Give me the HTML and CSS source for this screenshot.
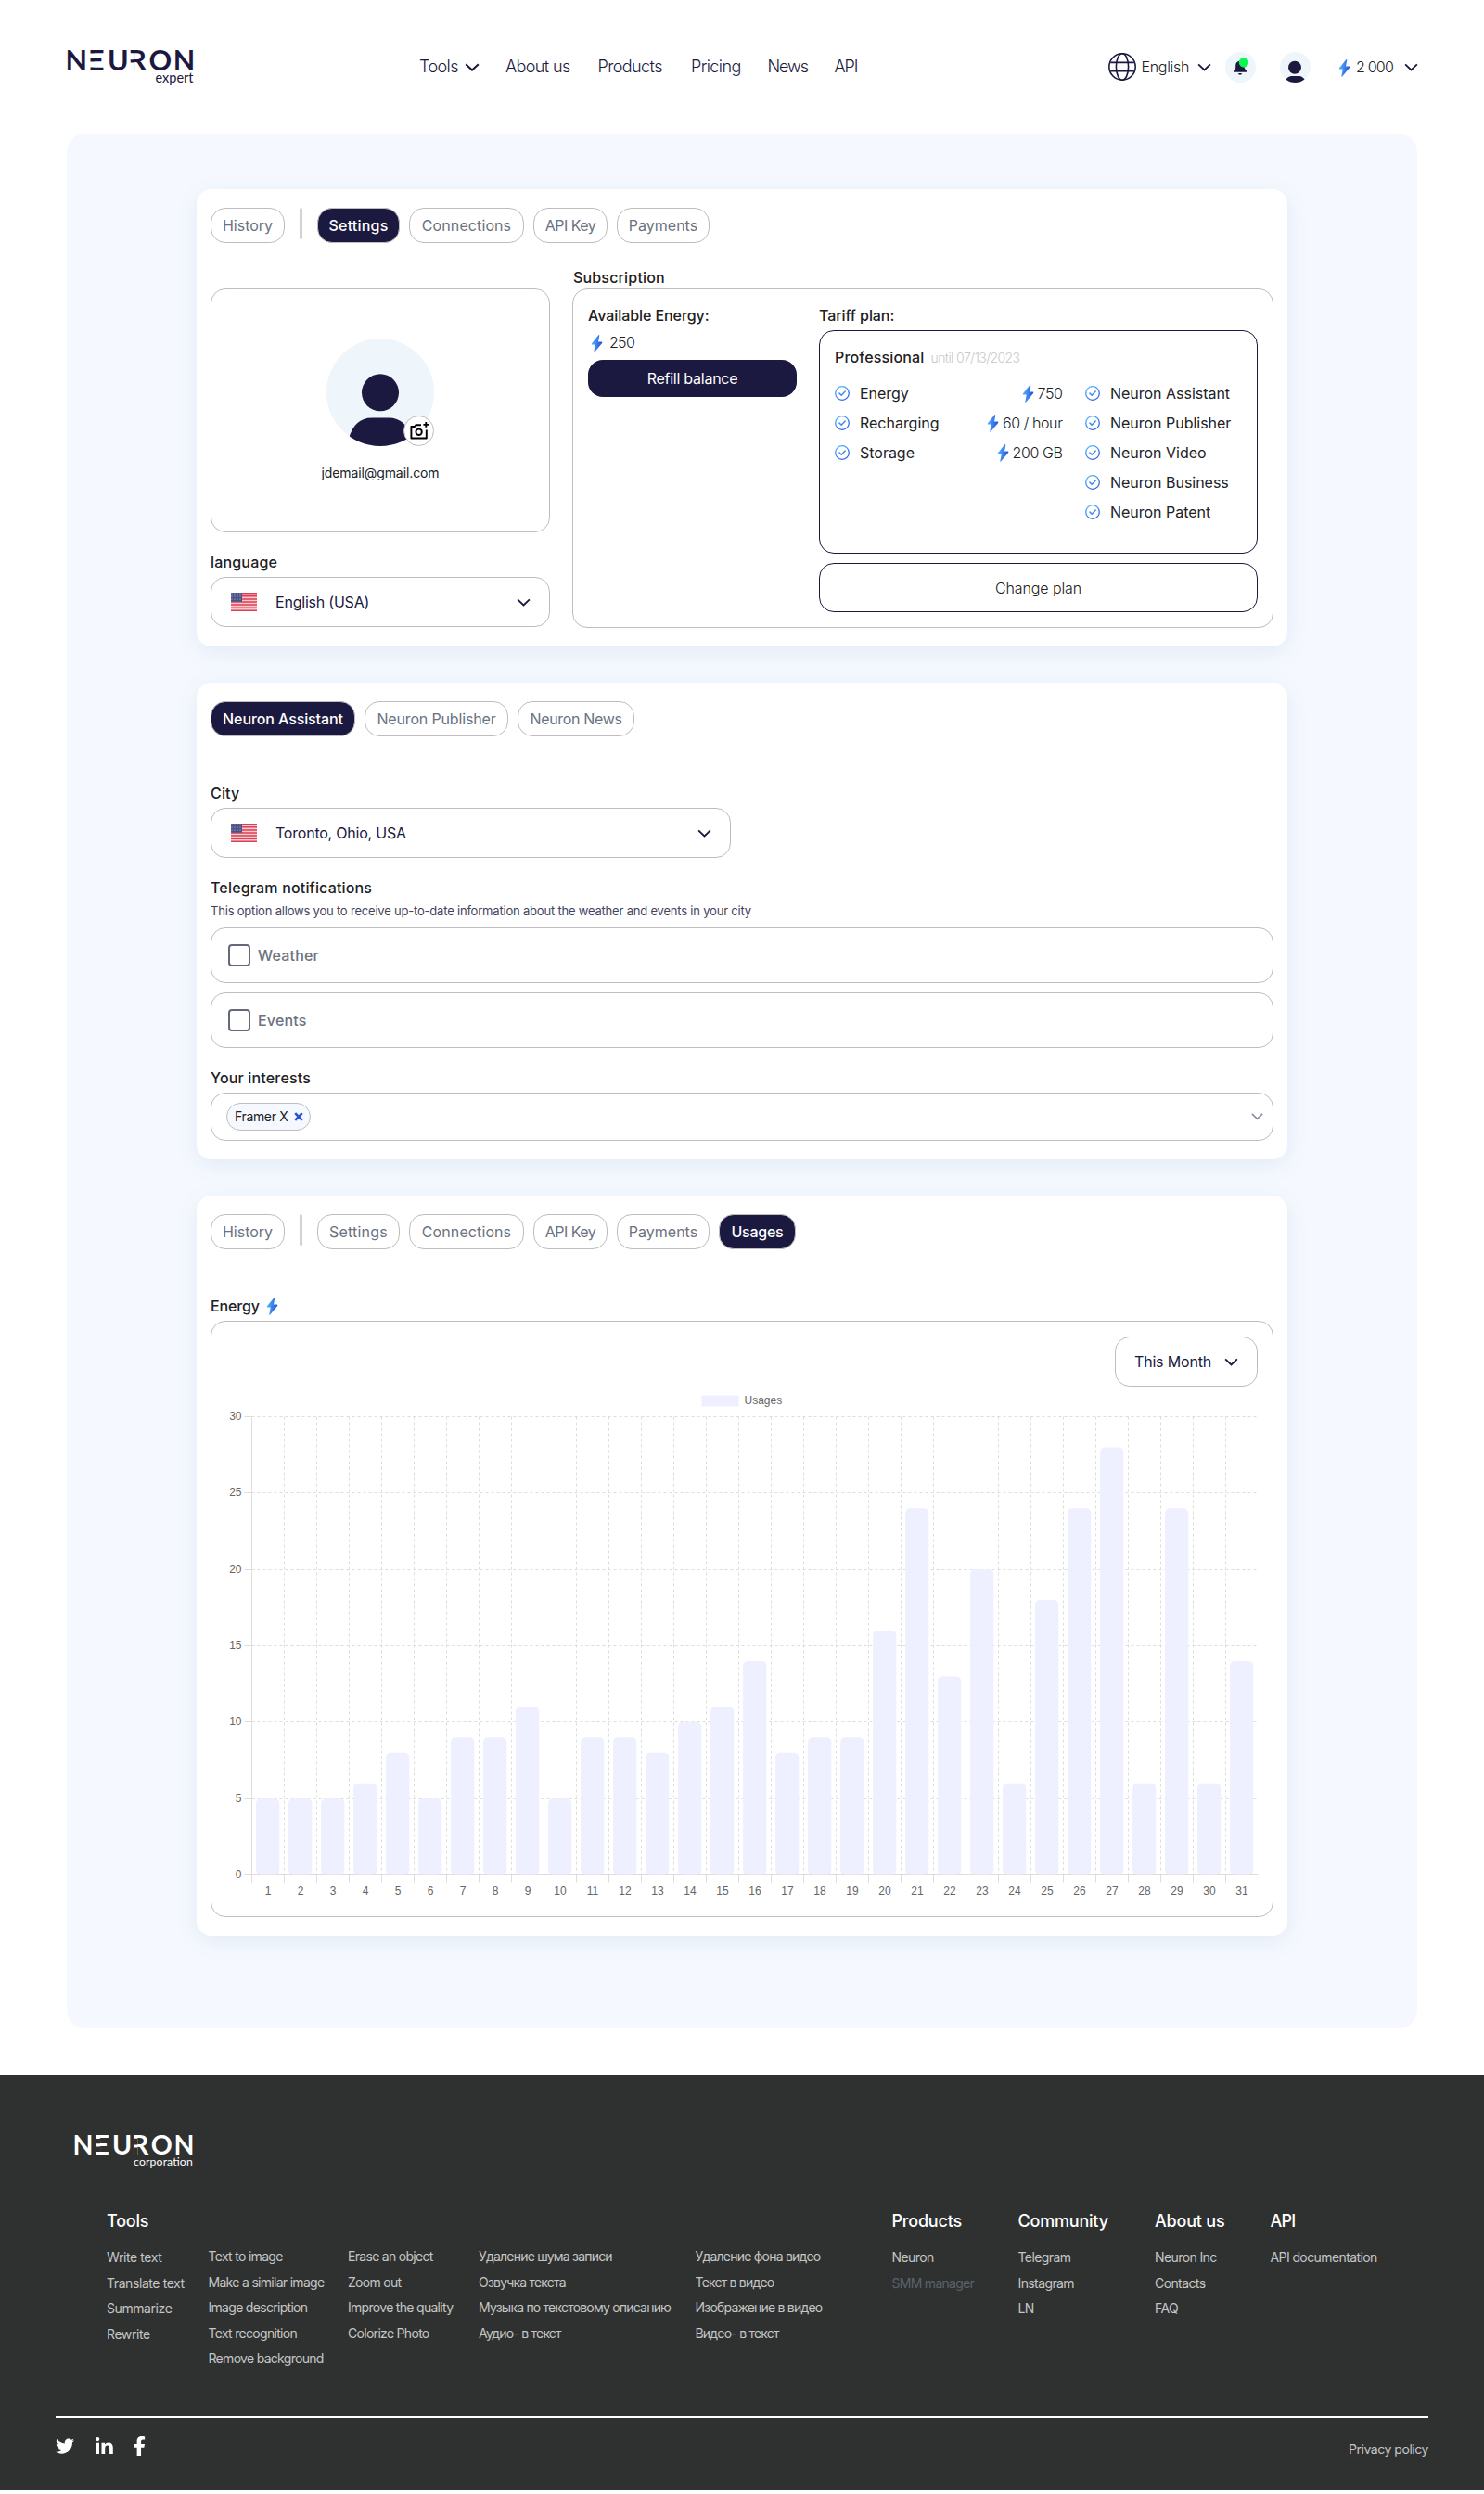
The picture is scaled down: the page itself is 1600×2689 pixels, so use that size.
FILE: index.html
```html
<!DOCTYPE html>
<html lang="en">
<head>
<meta charset="utf-8">
<title>Neuron Expert – Settings</title>
<link rel="stylesheet" href="styles.css">
</head>
<body>
<svg class="sprite" width="0" height="0" aria-hidden="true">
  <defs>
    <linearGradient id="bolt-fill" x1="0" y1="0.4" x2="1" y2="0.6">
      <stop offset="0" stop-color="#56b8f8"/>
      <stop offset="0.5" stop-color="#3b82f0"/>
      <stop offset="1" stop-color="#2349d8"/>
    </linearGradient>
    <linearGradient id="check-stroke" x1="0" y1="0" x2="0.6" y2="1">
      <stop offset="0" stop-color="#5cc0f8"/>
      <stop offset="1" stop-color="#2f62e6"/>
    </linearGradient>
    <clipPath id="avatar-clip"><circle cx="58" cy="58" r="58"/></clipPath>
    <pattern id="stars" width="3" height="3" patternUnits="userSpaceOnUse">
      <rect width="3" height="3" fill="#4b5087"/>
      <circle cx="1" cy="1" r=".55" fill="#d5d7ea"/>
    </pattern>
    <symbol id="bolt" viewBox="0 0 13 19">
      <path d="M8.3.2 1 9.2Q.2 10.4 1.5 10.5L4.7 10.6 3.3 18.2Q3.4 19.2 4.2 18.5L11.9 9.2Q12.9 7.8 11.5 7.6L8 7.4 9.3.8Q9.2-.4 8.3.2Z" fill="url(#bolt-fill)"/>
    </symbol>
    <symbol id="chevron" viewBox="0 0 16 9">
      <path d="M1.2 1.2 8 7.6 14.8 1.2" fill="none" stroke="#1b193f" stroke-width="2"/>
    </symbol>
    <symbol id="check" viewBox="0 0 16 16">
      <circle cx="8" cy="8" r="7.3" fill="none" stroke="url(#check-stroke)" stroke-width="1.3"/>
      <path d="M5 8.1 7.2 10.3 11.2 6" fill="none" stroke="#3f8cf0" stroke-width="1.5" stroke-linecap="round" stroke-linejoin="round"/>
    </symbol>
    <symbol id="flag" viewBox="0 0 28 20">
      <rect width="28" height="20" rx="1" fill="#fbc9cd"/>
      <path d="M0 .75H28M0 3.85H28M0 6.95H28M0 10.05H28M0 13.1H28M0 16.2H28M0 19.25H28" stroke="#d94256" stroke-width="1.5"/>
      <rect width="12" height="10" fill="url(#stars)"/>
    </symbol>
  </defs>
</svg>

<header class="header">
  <svg class="logo" width="140" height="44" viewBox="0 0 140 44" role="img" aria-label="Neuron expert">
    <text class="logo-name" y="26" x="-1.5 22.9 43.9 66.3 88.5 114.8">NEURON</text>
    <path class="logo-cut" d="M24.5 7.4H30V13.1H24.5ZM24.5 16.6H30V22.4H24.5ZM67.5 7.3H73V14.3H67.5ZM67.5 17.6H73V27H67.5Z"/>
    <text class="logo-sub" x="136.5" y="39" text-anchor="end" textLength="41">expert</text>
  </svg>
  <nav class="nav">
    <a class="nav-drop">Tools <svg width="16" height="9"><use href="#chevron"/></svg></a>
    <a>About us</a>
    <a>Products</a>
    <a>Pricing</a>
    <a class="tight">News</a>
    <a class="tight">API</a>
  </nav>
  <div class="actions">
    <svg width="30" height="30" viewBox="0 0 30 30" fill="none" stroke="#1b193f" stroke-width="1.6">
      <circle cx="15" cy="15" r="14.2"/><ellipse cx="15" cy="15" rx="6.6" ry="14.2"/><path d="M2.2 10.4H27.8M2.2 19.6H27.8"/>
    </svg>
    <span>English</span>
    <svg width="15" height="9"><use href="#chevron"/></svg>
    <svg width="33" height="33" viewBox="0 0 33 33">
      <circle cx="16.5" cy="16.5" r="16.5" fill="#eef5fb"/>
      <path d="M16 9.4A5 5 0 0 0 11.2 14.4V17.6L9 20.4V21.8H23V20.4L20.8 17.6V14.4A5 5 0 0 0 16 9.4ZM14 23H18A2 1.8 0 0 1 14 23Z" fill="#1b193f"/>
      <circle cx="20" cy="11.2" r="5.2" fill="#08fa51"/>
    </svg>
    <svg width="33" height="33" viewBox="0 0 33 33">
      <circle cx="16.5" cy="16.5" r="16.5" fill="#eef5fb"/>
      <circle cx="16" cy="16.7" r="7" fill="#1b193f"/>
      <path d="M6.3 29.5Q9 26 12 26H21Q24 26 26.500 29.500 22 33 16.500 33 10.500 33 6.300 29.500Z" fill="#1b193f"/>
    </svg>
    <svg class="header-bolt" width="13" height="19"><use href="#bolt"/></svg>
    <span class="balance">2 000</span>
    <svg width="15" height="9"><use href="#chevron"/></svg>
  </div>
</header>

<main class="panel">
  <section class="card">
    <div class="tabs">
      <a class="tab w-history">History</a><i class="divider"></i>
      <a class="tab w-settings active">Settings</a>
      <a class="tab w-connections">Connections</a>
      <a class="tab w-api">API Key</a>
      <a class="tab w-payments">Payments</a>
    </div>
    <div class="profile-grid">
      <div class="profile-side">
        <div class="box profile">
          <div class="avatar">
            <svg width="116" height="116" viewBox="0 0 116 116">
              <g clip-path="url(#avatar-clip)">
                <rect width="116" height="116" fill="#eef5fb"/>
                <circle cx="58" cy="58.3" r="20" fill="#1b193f"/>
                <path d="M24 108Q30 85.500 49 85.500H67Q86 85.500 92 108L92 116H24Z" fill="#1b193f"/>
              </g>
            </svg>
            <span class="camera">
              <svg width="21" height="19" viewBox="0 0 21 19" fill="none" stroke="#000" stroke-width="1.9" stroke-linejoin="round">
                <path d="M12 3.200H6.500L5 5H1.400V17.500H17.800V8.500"/><circle cx="9.600" cy="10.800" r="3.200"/><path d="M17.300 0V5.800M14.400 2.900H20.200"/>
              </svg>
            </span>
          </div>
          <p class="email">jdemail@gmail.com</p>
        </div>
        <h3 class="label side-label">language</h3>
        <div class="box select">
          <svg width="28" height="20"><use href="#flag"/></svg>
          <span class="select-text">English (USA)</span>
          <svg width="15" height="9"><use href="#chevron"/></svg>
        </div>
      </div>
      <div class="subscription">
        <h3 class="label sub-label">Subscription</h3>
        <div class="box sub-box">
          <div class="energy-col">
            <h3 class="label snug">Available Energy:</h3>
            <div class="energy-row"><svg width="13" height="19"><use href="#bolt"/></svg><span>250</span></div>
            <button class="btn-dark">Refill balance</button>
          </div>
          <div class="tariff-col">
            <h3 class="label snug tariff-label">Tariff plan:</h3>
            <div class="plan">
              <div class="plan-head"><h3 class="label">Professional</h3><span class="until">until 07/13/2023</span></div>
              <div class="plan-lists">
                <ul class="limits">
                  <li><svg width="16" height="16"><use href="#check"/></svg><span>Energy</span><b><svg width="13" height="19"><use href="#bolt"/></svg>750</b></li>
                  <li><svg width="16" height="16"><use href="#check"/></svg><span>Recharging</span><b><svg width="13" height="19"><use href="#bolt"/></svg>60 / hour</b></li>
                  <li><svg width="16" height="16"><use href="#check"/></svg><span>Storage</span><b><svg width="13" height="19"><use href="#bolt"/></svg>200 GB</b></li>
                </ul>
                <ul>
                  <li><svg width="16" height="16"><use href="#check"/></svg><span>Neuron Assistant</span></li>
                  <li><svg width="16" height="16"><use href="#check"/></svg><span>Neuron Publisher</span></li>
                  <li><svg width="16" height="16"><use href="#check"/></svg><span>Neuron Video</span></li>
                  <li><svg width="16" height="16"><use href="#check"/></svg><span>Neuron Business</span></li>
                  <li><svg width="16" height="16"><use href="#check"/></svg><span>Neuron Patent</span></li>
                </ul>
              </div>
            </div>
            <button class="btn-outline">Change plan</button>
          </div>
        </div>
      </div>
    </div>
  </section>

  <section class="card">
    <div class="tabs">
      <a class="tab w-assistant active">Neuron Assistant</a>
      <a class="tab w-publisher">Neuron Publisher</a>
      <a class="tab w-news">Neuron News</a>
    </div>
    <h3 class="label first-label">City</h3>
    <div class="box select city">
      <svg width="28" height="20"><use href="#flag"/></svg>
      <span class="select-text">Toronto, Ohio, USA</span>
      <svg width="15" height="9"><use href="#chevron"/></svg>
    </div>
    <h3 class="label next-label">Telegram notifications</h3>
    <p class="hint">This option allows you to receive up-to-date information about the weather and events in your city</p>
    <div class="box option"><i class="checkbox"></i>Weather</div>
    <div class="box option"><i class="checkbox"></i>Events</div>
    <h3 class="label next-label">Your interests</h3>
    <div class="box interests">
      <span class="chip">Framer X
        <svg width="10" height="10" viewBox="0 0 10 10" stroke="#2a52d6" stroke-width="2.6"><path d="M1.2 1.2 8.8 8.8M8.8 1.2 1.2 8.8"/></svg>
      </span>
      <svg width="13" height="8" viewBox="0 0 13 8" fill="none" stroke="#8d909c" stroke-width="1.5"><path d="M.8.9 6.5 6.4 12.2.9"/></svg>
    </div>
  </section>

  <section class="card">
    <div class="tabs">
      <a class="tab w-history">History</a><i class="divider"></i>
      <a class="tab w-settings">Settings</a>
      <a class="tab w-connections">Connections</a>
      <a class="tab w-api">API Key</a>
      <a class="tab w-payments">Payments</a>
      <a class="tab w-usages active">Usages</a>
    </div>
    <h3 class="label usage-label">Energy <svg width="13" height="19"><use href="#bolt"/></svg></h3>
    <div class="box usage">
      <div class="box period">This Month <svg width="15" height="9"><use href="#chevron"/></svg></div>
      <svg id="usage-chart" class="chart" width="1114" height="555" viewBox="0 0 1114 555"></svg>
    </div>
  </section>
</main>

<footer class="footer">
  <svg class="logo-footer" width="131" height="40" viewBox="0 0 140 42.7" role="img" aria-label="Neuron corporation">
    <text class="logo-name" y="26" x="-1.5 22.9 43.9 66.3 88.5 114.8">NEURON</text>
    <path class="logo-cut" d="M24.500 7.400H30V13.100H24.500ZM24.500 16.600H30V22.400H24.500ZM67.500 7.300H73V14.300H67.500ZM67.500 17.600H73V27H67.500Z"/>
    <text class="logo-sub small" x="136.5" y="38.5" text-anchor="end" textLength="68">corporation</text>
  </svg>
  <div class="links">
    <div class="wide"><h4>Tools</h4><a>Write text</a><a>Translate text</a><a>Summarize</a><a>Rewrite</a></div>
    <div class="no-head"><a>Text to image</a><a>Make a similar image</a><a>Image description</a><a>Text recognition</a><a>Remove background</a></div>
    <div class="no-head"><a>Erase an object</a><a>Zoom out</a><a>Improve the quality</a><a>Colorize Photo</a></div>
    <div class="no-head" lang="ru"><a>Удаление шума записи</a><a>Озвучка текста</a><a>Музыка по текстовому описанию</a><a>Аудио- в текст</a></div>
    <div class="no-head" lang="ru"><a>Удаление фона видео</a><a>Текст в видео</a><a>Изображение в видео</a><a>Видео- в текст</a></div>
    <div><h4>Products</h4><a>Neuron</a><a class="muted">SMM manager</a></div>
    <div><h4>Community</h4><a>Telegram</a><a>Instagram</a><a>LN</a></div>
    <div><h4>About us</h4><a>Neuron Inc</a><a>Contacts</a><a>FAQ</a></div>
    <div><h4 class="api">API</h4><a>API documentation</a></div>
  </div>
  <div class="bottom">
    <div class="social">
      <svg width="20" height="17" viewBox="0 0 512 416" fill="#fff"><path d="M459.4 103.7c.3 4.5.3 9.1.3 13.6C459.7 256 354.1 416 161.1 416 101.700 416 46.500 398.800 0 368.900c8.400 1 16.600 1.300 25.300 1.300 49.100 0 94.200-16.600 130.300-44.800-46.100-1-84.800-31.200-98.100-72.800 6.500 1 13 1.600 19.800 1.600 9.400 0 18.800-1.300 27.600-3.600C56.800 240.800 20.800 198.500 20.800 147.200v-1.300c14 7.800 30.200 12.700 47.400 13.300C39.900 140.400 21.400 108.200 21.400 71.800c0-19.500 5.200-37.400 14.300-53C87.400 82.500 165 124.100 252.100 128.700c-1.600-7.800-2.600-15.900-2.600-24C249.500 46.800 296.300 0 354.400 0c30.200 0 57.500 12.700 76.700 33.100 23.700-4.500 46.500-13.300 66.600-25.300-7.800 24.400-24.400 44.800-46.100 57.800 21.100-2.300 41.600-8.100 60.400-16.200-14.300 20.800-32.200 39.300-52.600 54.300z"/></svg>
      <svg class="linkedin" width="19" height="18" viewBox="0 0 19 18" fill="#fff"><circle cx="2.2" cy="2.1" r="2.1"/><path d="M.4 5.700H4V18H.4ZM6.500 5.700H10V7.400Q11.200 5.400 13.800 5.400 18.800 5.400 18.800 11V18H15.100V11.900Q15.100 8.500 12.800 8.500 10.200 8.500 10.200 11.900V18H6.500Z"/></svg>
      <svg class="facebook" width="12" height="21" viewBox="22 0 272 512" preserveAspectRatio="none" fill="#fff"><path d="M279.140 288l14.220-92.660h-88.910v-60.130c0-25.350 12.420-50.060 52.240-50.060h40.420V6.260S260.430 0 225.360 0c-73.220 0-121.080 44.380-121.080 124.720v70.620H22.890V288h81.390v224h100.170V288z"/></svg>
    </div>
    <a>Privacy policy</a>
  </div>
</footer>
<script src="chart.js"></script>
</body>
</html>
```
FILE: styles.css
```css
* { box-sizing: border-box; margin: 0; padding: 0; }

body {
  font-family: Inter, "Noto Sans", sans-serif;
  font-size: 16px;
  line-height: 24px;
  color: #202124;
  background: #fff;
}

svg { display: block; flex: none; overflow: visible; }
.sprite { position: absolute; }
ul { list-style: none; }
button { font: inherit; background: none; }

/* Header */
.header { display: flex; align-items: center; height: 144px; padding: 0 71px 0 72px; }
.logo { margin-bottom: 1px; color: #1b193f; --cut: #fff; }
.logo-footer { color: #fff; --cut: #2f3130; }
.logo-name { font: 700 30.5px Lato, sans-serif; fill: currentColor; }
.logo-sub { font: 400 14.5px Lato, sans-serif; fill: currentColor; }
.logo-sub.small { font-size: 13px; }
.logo-cut { fill: var(--cut); }

.nav {
  display: grid;
  grid-template-columns: 93px 99.5px 100.5px 82.5px 72px auto;
  align-items: center;
  margin-left: 240px;
  font-size: 18px;
  font-weight: 300;
  letter-spacing: -.6px;
  color: #1b193f;
}
.nav-drop { display: flex; align-items: center; gap: 7px; }
.nav .tight { letter-spacing: -1.1px; }

.actions {
  display: grid;
  grid-template-columns: 36px 60px 30px 59px 63px 19.5px 52px 15px;
  align-items: center;
  margin-left: auto;
  font-weight: 300;
  letter-spacing: -.3px;
}
.balance { letter-spacing: -.8px; }
.header-bolt { margin-top: 3px; }

/* Cards */
.panel {
  display: flex;
  flex-direction: column;
  gap: 39px;
  margin: 0 72px;
  padding: 60px 140px 100px;
  border-radius: 20px;
  background: #f5f9ff;
}
.card {
  padding: 20px 15px;
  border-radius: 16px;
  background: #fff;
  box-shadow: 0 6px 26px rgba(0, 60, 110, .08);
}
.box { border: 1px solid #bdbdbd; border-radius: 16px; }

.tabs { display: flex; gap: 10px; }
.tab {
  display: flex;
  align-items: center;
  justify-content: center;
  height: 38px;
  border: 1px solid #bdbdbd;
  border-radius: 16px;
  color: #6b7280;
}
.tab.active { background: #1b193f; color: #fff; font-weight: 500; }
.divider { width: 3px; height: 34px; margin: 0 6px; border-radius: 2px; background: #d2d2d4; }
.w-history { width: 80px; }
.w-settings { width: 89px; letter-spacing: .2px; }
.w-connections { width: 124px; letter-spacing: .1px; }
.w-api { width: 80px; letter-spacing: -.55px; }
.w-payments { width: 100px; }
.w-usages { width: 83px; letter-spacing: -.25px; }
.w-assistant { width: 156px; letter-spacing: -.1px; }
.w-publisher { width: 155px; letter-spacing: -.16px; }
.w-news { width: 126px; letter-spacing: -.34px; }

.label { font-size: 16px; font-weight: 500; letter-spacing: .17px; }
.label.snug { letter-spacing: -.07px; }

/* Profile and subscription */
.profile-grid { display: grid; grid-template-columns: 366px 756px; gap: 24px; }
.profile-side { padding-top: 49px; }
.profile { display: flex; flex-direction: column; align-items: center; height: 263px; padding-top: 53px; }
.avatar { position: relative; }
.camera {
  position: absolute;
  right: 0;
  bottom: 0;
  display: flex;
  align-items: center;
  justify-content: center;
  width: 33px;
  height: 33px;
  padding-left: 1px;
  border: 1px solid #bdbdbd;
  border-radius: 50%;
  background: #fff;
}
.email { margin-top: 17px; font-size: 14px; letter-spacing: -.1px; }
.side-label { margin: 20px 0 4px; }
.select { display: flex; align-items: center; height: 54px; padding: 0 20px 0 21px; color: #1b193f; }
.select-text { flex: 1; margin-left: 20px; letter-spacing: -.22px; }

.sub-label { margin: 25px 0 0 1px; }
.sub-box { display: flex; gap: 24px; height: 366px; padding: 16px; }
.energy-col { width: 225px; }
.energy-row {
  display: flex;
  align-items: center;
  gap: 7px;
  height: 33px;
  margin-bottom: 3px;
  padding-left: 3px;
  font-weight: 300;
  letter-spacing: -.7px;
}
.energy-row svg { margin-top: 4px; }
.btn-dark {
  width: 100%;
  height: 40px;
  border: 0;
  border-radius: 16px;
  background: #1b193f;
  color: #fff;
  letter-spacing: -.25px;
}
.tariff-col { flex: 1; }
.tariff-label { margin-bottom: 4px; }
.plan { height: 241px; padding: 15px 16px; border: 1px solid #1b193f; border-radius: 16px; }
.plan-head { display: flex; align-items: center; gap: 7px; margin-bottom: 10px; }
.until { padding-top: 2px; font-size: 14px; font-weight: 300; letter-spacing: -.6px; color: #c8c9cc; }
.plan-lists { display: grid; grid-template-columns: 245.5px 1fr; gap: 24.5px; }
.plan li { display: flex; align-items: center; height: 32px; }
.plan li span { margin-left: 11px; letter-spacing: -.02px; }
.plan li b { display: flex; align-items: center; gap: 4px; margin-left: auto; font-weight: 300; letter-spacing: -.4px; }
.btn-outline {
  display: block;
  width: 100%;
  height: 53px;
  margin-top: 10px;
  border: 1px solid #1b193f;
  border-radius: 16px;
  color: #202124;
  font-weight: 300;
  letter-spacing: -.1px;
}

/* Assistant options */
.first-label { margin: 49px 0 4px; }
.next-label { margin-top: 20px; }
.city { width: 561px; }
.hint { margin: 4px 0 9px; font-size: 13px; line-height: 18px; letter-spacing: -.2px; color: #44435e; }
.option {
  display: flex;
  align-items: center;
  gap: 8px;
  height: 60px;
  padding-left: 18px;
  font-weight: 500;
  letter-spacing: .2px;
  color: #6b7280;
}
.option + .option { margin-top: 10px; }
.checkbox { width: 24px; height: 24px; border: 2px solid #646878; border-radius: 4px; }
.interests {
  display: flex;
  align-items: center;
  justify-content: space-between;
  height: 52px;
  margin-top: 4px;
  padding: 0 10px 0 16px;
}
.chip {
  display: flex;
  align-items: center;
  gap: 7px;
  height: 30px;
  padding: 0 7px 0 8px;
  border: 1px solid #bdbdbd;
  border-radius: 15px;
  background: #f5f9ff;
  font-size: 14px;
  letter-spacing: -.35px;
}

/* Usage chart */
.usage-label { display: flex; align-items: center; gap: 7px; margin: 49px 0 4px; letter-spacing: -.15px; }
.usage { height: 643px; padding: 16px; }
.period {
  display: flex;
  align-items: center;
  justify-content: space-between;
  width: 154px;
  height: 54px;
  margin-left: auto;
  padding: 0 20px;
  letter-spacing: -.18px;
  color: #1b193f;
}
.chart text { font: 12px "Liberation Sans", Arial, sans-serif; fill: #666; }
.grid-line { stroke: #ddd; stroke-dasharray: 3 3; }
.axis-line { stroke: #ddd; }
.bar { fill: #eff0ff; }

/* Footer */
.footer { height: 448px; margin: 50px 0 4px; padding: 62px 60px 0; background: #2f3130; color: #c4c5c5; }
.logo-footer { margin-left: 20px; }
.links {
  display: grid;
  grid-template-columns: 109.5px 150.5px 141px 233.5px 212px 136px 147.5px 124.5px auto;
  height: 222px;
  margin-top: 44px;
  padding-left: 55px;
}
.links a, .bottom a { font-size: 14px; letter-spacing: -.6px; white-space: nowrap; }
.links a { display: block; line-height: 27.6px; }
.links .wide a { letter-spacing: -.42px; }
.links .no-head a { letter-spacing: -.7px; }
.links .no-head:lang(ru) a { letter-spacing: -.79px; }
.links h4 { margin-bottom: 13px; font-size: 18px; font-weight: 500; letter-spacing: -.2px; color: #fff; }
.links .api { letter-spacing: -.8px; }
.links .no-head { padding-top: 36px; }
.links .muted { color: #5b616d; letter-spacing: -.72px; }
.bottom { display: flex; justify-content: space-between; align-items: center; height: 70px; border-top: 2px solid #fff; }
.bottom a { letter-spacing: -.45px; }
.social { display: flex; align-items: center; height: 21px; margin-bottom: 7px; }
.linkedin { margin: 0 22px 2px 23px; }
```
FILE: chart.js
```js
const usages = [5, 5, 5, 6, 8, 5, 9, 9, 11, 5, 9, 9, 8, 10, 11, 14, 8, 9, 9, 16, 24, 13, 20, 6, 18, 24, 28, 6, 24, 6, 14];
const left = 27.5, top30 = 32.5, base = 526.5, step = 35, unit = (base - top30) / 30;
const right = left + step * usages.length;
const line = (cls, x1, y1, x2, y2) => `<line class="${cls}" x1="${x1}" y1="${y1}" x2="${x2}" y2="${y2}"/>`;
const parts = [];

for (let v = 0; v <= 30; v += 5) {
  const y = Math.floor(base - v * unit) + 0.5;
  parts.push(line('axis-line', left - 8, y, left, y));
  parts.push(line('grid-line', left, y, right, y));
  parts.push(`<text x="${left - 11}" y="${y + 3}" text-anchor="end">${v}</text>`);
}
for (let i = 0; i < usages.length; i++) {
  const x = left + i * step;
  parts.push(line('grid-line', x, top30, x, base));
  parts.push(line('axis-line', x, base, x, base + 8));
}
parts.push(line('axis-line', left, top30, left, base), line('axis-line', left, base, right, base));
usages.forEach((v, i) => {
  const x = left + i * step;
  parts.push(`<rect class="bar" x="${x + 4.6}" y="${base - v * unit}" width="25.2" height="${v * unit}" rx="5"/>`);
  parts.push(`<text x="${x + step / 2}" y="547.5" text-anchor="middle">${i + 1}</text>`);
});
parts.push('<rect class="bar" x="512.5" y="9.5" width="40" height="12"/><text x="558.5" y="18.5">Usages</text>');
document.getElementById('usage-chart').innerHTML = parts.join('');
```
